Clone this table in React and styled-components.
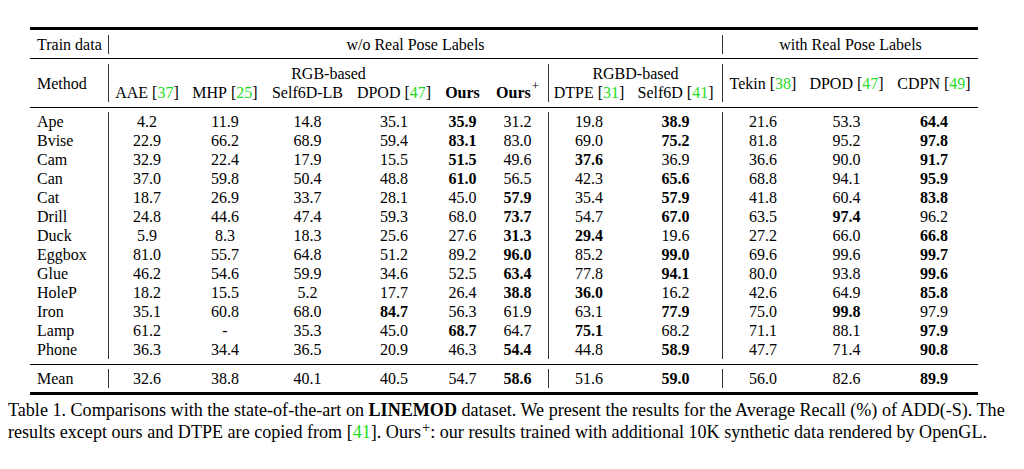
import React from 'react';
import styled, { createGlobalStyle } from 'styled-components';

const GlobalStyle = createGlobalStyle`
  html, body {
    margin: 0;
    padding: 0;
    background: #ffffff;
  }
  body {
    font-family: "Liberation Serif", "Times New Roman", serif;
    color: #000;
  }
`;

const COLS = '78px 77px 80px 85px 88px 49px 61px 81px 93px 81px 87px 88px';

const rows = [
  ['Ape', ['4.2', '11.9', '14.8', '35.1', '*35.9', '31.2', '19.8', '*38.9', '21.6', '53.3', '*64.4']],
  ['Bvise', ['22.9', '66.2', '68.9', '59.4', '*83.1', '83.0', '69.0', '*75.2', '81.8', '95.2', '*97.8']],
  ['Cam', ['32.9', '22.4', '17.9', '15.5', '*51.5', '49.6', '*37.6', '36.9', '36.6', '90.0', '*91.7']],
  ['Can', ['37.0', '59.8', '50.4', '48.8', '*61.0', '56.5', '42.3', '*65.6', '68.8', '94.1', '*95.9']],
  ['Cat', ['18.7', '26.9', '33.7', '28.1', '45.0', '*57.9', '35.4', '*57.9', '41.8', '60.4', '*83.8']],
  ['Drill', ['24.8', '44.6', '47.4', '59.3', '68.0', '*73.7', '54.7', '*67.0', '63.5', '*97.4', '96.2']],
  ['Duck', ['5.9', '8.3', '18.3', '25.6', '27.6', '*31.3', '*29.4', '19.6', '27.2', '66.0', '*66.8']],
  ['Eggbox', ['81.0', '55.7', '64.8', '51.2', '89.2', '*96.0', '85.2', '*99.0', '69.6', '99.6', '*99.7']],
  ['Glue', ['46.2', '54.6', '59.9', '34.6', '52.5', '*63.4', '77.8', '*94.1', '80.0', '93.8', '*99.6']],
  ['HoleP', ['18.2', '15.5', '5.2', '17.7', '26.4', '*38.8', '*36.0', '16.2', '42.6', '64.9', '*85.8']],
  ['Iron', ['35.1', '60.8', '68.0', '*84.7', '56.3', '61.9', '63.1', '*77.9', '75.0', '*99.8', '97.9']],
  ['Lamp', ['61.2', '-', '35.3', '45.0', '*68.7', '64.7', '*75.1', '68.2', '71.1', '88.1', '*97.9']],
  ['Phone', ['36.3', '34.4', '36.5', '20.9', '46.3', '*54.4', '44.8', '*58.9', '47.7', '71.4', '*90.8']],
];

const mean = ['32.6', '38.8', '40.1', '40.5', '54.7', '*58.6', '51.6', '*59.0', '56.0', '82.6', '*89.9'];

// columns that carry a vertical rule on their left side (1-based grid column)
const ruled = [2, 8, 10];

const Page = styled.div`
  padding: 27px 0 0 0;
`;

const Table = styled.div`
  margin-left: 30px;
  width: 948px;
  border-top: 3px solid #000;
  border-bottom: 3px solid #000;
  font-size: 16px;
`;

const Section = styled.div`
  display: grid;
  grid-template-columns: ${COLS};
  grid-auto-rows: 19px;
  padding: ${p => p.$top}px 0 ${p => p.$bottom}px 0;
  border-bottom: ${p => (p.$rule ? '1px solid #000' : 'none')};
`;

const Cell = styled.div`
  box-sizing: border-box;
  line-height: 19px;
  white-space: nowrap;
  padding-left: ${p => (p.$align === 'left' ? '7px' : '0')};
  font-weight: ${p => (p.$bold ? 700 : 400)};
  border-left: ${p => (p.$vline ? '1px solid #333' : 'none')};
  grid-column: ${p => p.$col || 'auto'};
  grid-row: ${p => p.$row || 'auto'};
  display: flex;
  align-items: center;
  justify-content: ${p => (p.$align === 'left' ? 'flex-start' : 'center')};
`;

const Ref = styled.span`
  color: #1fdc1f;
`;

const Sup = styled.span`
  display: inline-block;
  font-size: 0.8em;
  font-weight: 400;
  line-height: 0.8em;
  position: relative;
  top: ${p => p.$shift || '-0.5em'};
  margin-left: 1px;
`;

const Caption = styled.div`
  margin: 4px 0 0 8px;
  width: 993px;
  font-size: 18.1px;
  line-height: 22px;
`;

const CapLine = styled.div`
  text-align: ${p => (p.$justify ? 'justify' : 'left')};
  text-align-last: ${p => (p.$justify ? 'justify' : 'auto')};
  white-space: nowrap;
`;

const Cite = ({ n }) => (
  <>
    [<Ref>{n}</Ref>]
  </>
);

function ValueRow({ label, values }) {
  return (
    <>
      <Cell $align="left">{label}</Cell>
      {values.map((v, i) => {
        const bold = v.startsWith('*');
        return (
          <Cell key={i} $bold={bold} $vline={ruled.includes(i + 2)}>
            {bold ? v.slice(1) : v}
          </Cell>
        );
      })}
    </>
  );
}

export default function App() {
  return (
    <Page>
      <GlobalStyle />
      <Table>
        <Section $top={5} $bottom={4} $rule>
          <Cell $align="left" $col="1">Train data</Cell>
          <Cell $col="2 / 10" $vline>w/o Real Pose Labels</Cell>
          <Cell $col="10 / 13" $vline>with Real Pose Labels</Cell>
        </Section>

        <Section $top={5} $bottom={5} $rule>
          <Cell $align="left" $col="1" $row="1 / 3">Method</Cell>
          <Cell $col="2 / 8" $row="1" $vline>RGB-based</Cell>
          <Cell $col="8 / 10" $row="1" $vline>RGBD-based</Cell>
          <Cell $col="10" $row="1 / 3" $vline>Tekin&nbsp;<Cite n={38} /></Cell>
          <Cell $col="11" $row="1 / 3">DPOD&nbsp;<Cite n={47} /></Cell>
          <Cell $col="12" $row="1 / 3">CDPN&nbsp;<Cite n={49} /></Cell>
          <Cell $col="2" $row="2" $vline>AAE&nbsp;<Cite n={37} /></Cell>
          <Cell $col="3" $row="2">MHP&nbsp;<Cite n={25} /></Cell>
          <Cell $col="4" $row="2">Self6D-LB</Cell>
          <Cell $col="5" $row="2">DPOD&nbsp;<Cite n={47} /></Cell>
          <Cell $col="6" $row="2" $bold>Ours</Cell>
          <Cell $col="7" $row="2" $bold>Ours<Sup>+</Sup></Cell>
          <Cell $col="8" $row="2" $vline>DTPE&nbsp;<Cite n={31} /></Cell>
          <Cell $col="9" $row="2">Self6D&nbsp;<Cite n={41} /></Cell>
        </Section>

        <Section $top={4} $bottom={5} $rule>
          {rows.map(([label, values]) => (
            <ValueRow key={label} label={label} values={values} />
          ))}
        </Section>

        <Section $top={4} $bottom={4}>
          <ValueRow label="Mean" values={mean} />
        </Section>
      </Table>

      <Caption>
        <CapLine $justify>
          Table 1. Comparisons with the state-of-the-art on <b>LINEMOD</b> dataset. We present the results for the Average Recall (%) of ADD(-S). The
        </CapLine>
        <CapLine>
          results except ours and DTPE are copied from <Cite n={41} />. Ours<Sup $shift="-0.4em">+</Sup>: our results trained with additional 10K synthetic data rendered by OpenGL.
        </CapLine>
      </Caption>
    </Page>
  );
}
